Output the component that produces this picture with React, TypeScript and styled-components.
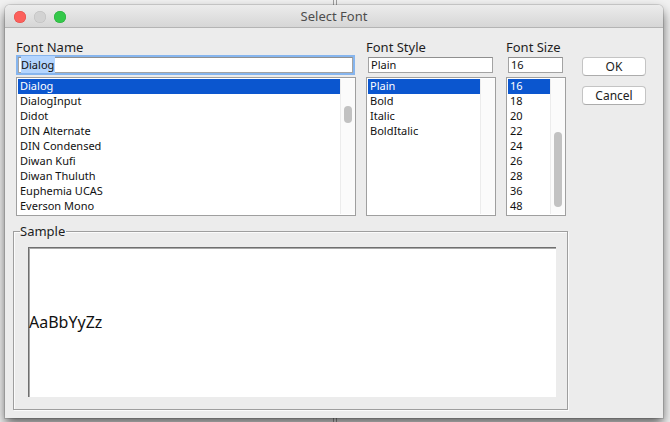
import React from "react";
import styled, { createGlobalStyle } from "styled-components";

const GlobalStyle = createGlobalStyle`
  html, body { margin: 0; padding: 0; }
  body { font-family: "Noto Sans", "Liberation Sans", sans-serif; }
  * { box-sizing: border-box; }
`;

const Desktop = styled.div`
  width: 670px;
  height: 422px;
  overflow: hidden;
  padding: 5px 0 0 5px;
  background-color: #f1f1f1;
  background-image: linear-gradient(
    to right,
    transparent 333px,
    #9d9d9d 333px,
    #9d9d9d 334px,
    transparent 334px,
    transparent 336px,
    #9d9d9d 336px,
    #9d9d9d 337px,
    transparent 337px
  );
`;

const Window = styled.div`
  width: 658px;
  height: 413px;
  display: flex;
  flex-direction: column;
  background: #ececec;
  border-radius: 5px 5px 0 0;
  box-shadow: 0 0 0 1px rgba(0, 0, 0, 0.12), 0 6px 12px rgba(0, 0, 0, 0.6);
  overflow: hidden;
`;

const TitleBar = styled.div`
  height: 23px;
  flex: none;
  display: grid;
  grid-template-columns: 1fr auto 1fr;
  align-items: center;
  padding: 0 9px;
  background: linear-gradient(to bottom, #ececec, #d6d6d6);
  border-bottom: 1px solid #b4b4b4;
`;

const Lights = styled.div`
  display: flex;
  gap: 8px;
  padding-top: 1px;
`;

const Light = styled.span<{ $fill: string; $edge: string }>`
  width: 12px;
  height: 12px;
  border-radius: 50%;
  background: ${(p) => p.$fill};
  box-shadow: inset 0 0 0 0.5px ${(p) => p.$edge};
`;

const Title = styled.div`
  font-size: 13px;
  color: #4d4d4d;
  line-height: 16px;
`;

const Content = styled.div`
  flex: 1;
  display: flex;
  flex-direction: column;
  padding: 11px 0 0 8px;
`;

const TopRow = styled.div`
  display: flex;
  margin-left: 3px;
`;

const Column = styled.div<{ $width: number; $gap: number }>`
  width: ${(p) => p.$width}px;
  margin-right: ${(p) => p.$gap}px;
  display: flex;
  flex-direction: column;
`;

const Label = styled.div`
  font-size: 13px;
  line-height: 16px;
  height: 16px;
  color: #1e1e1e;
  margin-bottom: 2px;
`;

const Field = styled.div<{ $focused?: boolean }>`
  height: 16px;
  margin: 0 3px 0 2px;
  background: #fff;
  border: 1px solid #a3a3a3;
  border-top-color: #8f8f8f;
  font-size: 11px;
  line-height: 13px;
  padding: 0 2px 0 2px;
  color: #111;
  box-shadow: ${(p) => (p.$focused ? "0 0 0 2px #86b5ee" : "none")};
  margin-bottom: 4px;
`;

const Selected = styled.span`
  background: #b4d5fe;
  padding: 1px 1px 1px 0;
`;

const ListBox = styled.div`
  height: 139px;
  background: #fff;
  border: 1px solid #9f9f9f;
  padding: 1px 0 0 1px;
  display: flex;
`;

const Rows = styled.div`
  flex: 1;
  display: flex;
  flex-direction: column;
`;

const Row = styled.div<{ $selected?: boolean }>`
  height: 15px;
  flex: none;
  font-size: 11px;
  line-height: 13px;
  padding-left: 2px;
  white-space: nowrap;
  color: ${(p) => (p.$selected ? "#fff" : "#111")};
  background: ${(p) => (p.$selected ? "#0b56cf" : "transparent")};
`;

const Track = styled.div`
  width: 15px;
  flex: none;
  margin-bottom: 1px;
  background: #fbfbfb;
  border-left: 1px solid #ececec;
`;

const Thumb = styled.div<{ $top: number; $height: number }>`
  width: 8px;
  margin-left: 3px;
  margin-top: ${(p) => p.$top}px;
  height: ${(p) => p.$height}px;
  border-radius: 4px;
  background: #c2c2c2;
`;

const Buttons = styled.div`
  width: 64px;
  margin-top: 18px;
  display: flex;
  flex-direction: column;
  gap: 10px;
`;

const Button = styled.button`
  height: 19px;
  width: 64px;
  padding: 0;
  background: #fff;
  border: 1px solid #c4c4c4;
  border-bottom-color: #acacac;
  border-radius: 4px;
  font-family: "Noto Sans", "Liberation Sans", sans-serif;
  font-size: 12px;
  line-height: 15px;
  color: #222;
`;

const SampleSet = styled.fieldset`
  width: 555px;
  margin: 6px 0 0 0;
  padding: 0 11px 12px 6px;
  border: 1px solid #9e9e9e;
  box-shadow: inset 1px 1px 0 #fbfbfb, 1px 1px 0 #fbfbfb;
  min-width: 0;
`;

const Legend = styled.legend`
  padding: 0 1px 0 0;
  font-size: 13px;
  line-height: 18px;
  color: #1e1e1e;
`;

const SampleArea = styled.div`
  height: 150px;
  margin: 7px 0 0 8px;
  background: #fff;
  border-top: 1px solid #6f6f6f;
  border-left: 1px solid #6f6f6f;
  box-shadow: inset 1px 1px 0 #a9a9a9;
  display: flex;
  align-items: center;
`;

const SampleText = styled.div`
  font-size: 16px;
  color: #111;
  margin-top: -2px;
`;

const fontNames = [
  "Dialog",
  "DialogInput",
  "Didot",
  "DIN Alternate",
  "DIN Condensed",
  "Diwan Kufi",
  "Diwan Thuluth",
  "Euphemia UCAS",
  "Everson Mono",
];
const styles = ["Plain", "Bold", "Italic", "BoldItalic"];
const sizes = ["16", "18", "20", "22", "24", "26", "28", "36", "48"];

function List({
  items,
  selected,
  thumb,
}: {
  items: string[];
  selected: string;
  thumb?: { top: number; height: number };
}) {
  return (
    <ListBox>
      <Rows>
        {items.map((it) => (
          <Row key={it} $selected={it === selected}>
            {it}
          </Row>
        ))}
      </Rows>
      <Track>{thumb && <Thumb $top={thumb.top} $height={thumb.height} />}</Track>
    </ListBox>
  );
}

export default function App() {
  return (
    <>
      <GlobalStyle />
      <Desktop>
        <Window>
          <TitleBar>
            <Lights>
              <Light $fill="#fc605c" $edge="#de4c47" />
              <Light $fill="#d2d2d2" $edge="#bcbcbc" />
              <Light $fill="#34c84a" $edge="#27a93a" />
            </Lights>
            <Title>Select Font</Title>
            <span />
          </TitleBar>
          <Content>
            <TopRow>
              <Column $width={340} $gap={10}>
                <Label>Font Name</Label>
                <Field $focused>
                  <Selected>Dialog</Selected>
                </Field>
                <List items={fontNames} selected="Dialog" thumb={{ top: 27, height: 17 }} />
              </Column>
              <Column $width={130} $gap={10}>
                <Label>Font Style</Label>
                <Field>Plain</Field>
                <List items={styles} selected="Plain" />
              </Column>
              <Column $width={60} $gap={16}>
                <Label>Font Size</Label>
                <Field>16</Field>
                <List items={sizes} selected="16" thumb={{ top: 53, height: 75 }} />
              </Column>
              <Buttons>
                <Button>OK</Button>
                <Button>Cancel</Button>
              </Buttons>
            </TopRow>
            <SampleSet>
              <Legend>Sample</Legend>
              <SampleArea>
                <SampleText>AaBbYyZz</SampleText>
              </SampleArea>
            </SampleSet>
          </Content>
        </Window>
      </Desktop>
    </>
  );
}
